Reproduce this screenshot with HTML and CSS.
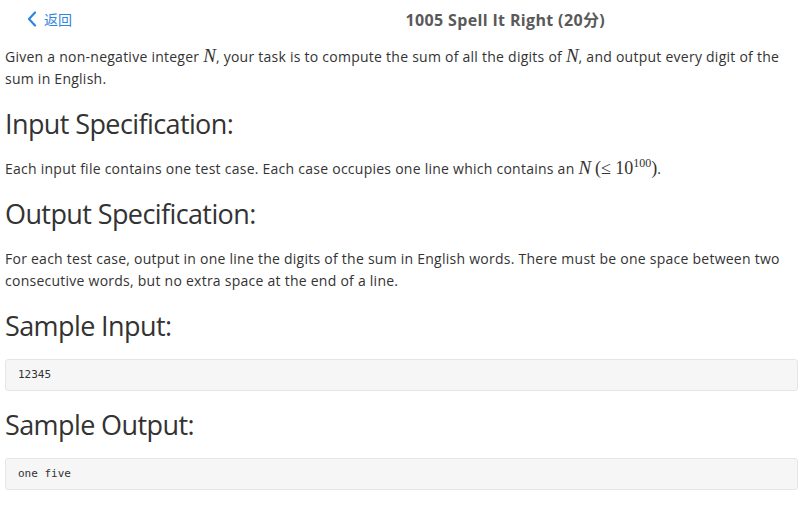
FILE: index.html
```html
<!DOCTYPE html>
<html lang="en">
<head>
<meta charset="utf-8">
<title>1005 Spell It Right</title>
<link rel="stylesheet" href="styles.css">
</head>
<body>
<header class="topbar">
  <a class="back" href="#">
    <svg class="chev" viewBox="0 0 10 16" width="10" height="16"><path d="M8 1.5 L2 8 L8 14.5" fill="none" stroke="currentColor" stroke-width="2.2" stroke-linecap="round" stroke-linejoin="round"/></svg>
    <span class="back-text">返回</span>
  </a>
  <h1 class="title">1005 Spell It Right (20分)</h1>
</header>
<main class="content">
  <p class="para">Given a non-negative integer <span class="math">N</span>, your task is to compute the sum of all the digits of <span class="math">N</span>, and output every digit of the sum in English.</p>
  <h2 class="heading">Input Specification:</h2>
  <p class="para">Each input file contains one test case. Each case occupies one line which contains an <span class="math">N</span> <span class="mathr">(≤ 10<sup class="sup">100</sup>)</span>.</p>
  <h2 class="heading">Output Specification:</h2>
  <p class="para">For each test case, output in one line the digits of the sum in English words. There must be one space between two consecutive words, but no extra space at the end of a line.</p>
  <h2 class="heading">Sample Input:</h2>
  <pre class="code">12345</pre>
  <h2 class="heading">Sample Output:</h2>
  <pre class="code">one five</pre>
</main>
</body>
</html>
```
FILE: styles.css
```css
html, body {
  margin: 0;
  padding: 0;
  background: #fff;
}
body {
  font-family: "Open Sans", "Noto Sans CJK SC", sans-serif;
  color: #333;
  font-size: 14px;
}
.topbar {
  height: 38px;
  display: flex;
  align-items: center;
  padding: 0 202px 0 27px;
}
.back {
  display: flex;
  align-items: center;
  gap: 7px;
  color: #2f86e0;
  text-decoration: none;
  font-size: 14px;
  font-family: "Noto Sans CJK SC", sans-serif;
}
.chev {
  display: block;
}
.title {
  margin: 0 0 0 auto;
  font-size: 16px;
  letter-spacing: 0.35px;
  font-weight: 700;
  color: #595959;
  font-family: "Open Sans", "Noto Sans CJK SC", sans-serif;
}
.content {
  padding: 0 9px 0 5px;
}
.para {
  margin: 8px 0 0;
  line-height: 22px;
  letter-spacing: 0.25px;
}
.math {
  font-family: "Liberation Serif", serif;
  font-style: italic;
  font-size: 19px;
  letter-spacing: 0;
  line-height: 0;
}
.mathr {
  font-family: "Liberation Serif", serif;
  font-size: 18px;
  letter-spacing: 0;
  line-height: 0;
}
.sup {
  font-size: 12px;
  line-height: 0;
  vertical-align: 7px;
}
.heading {
  margin: 17px 0 0;
  font-size: 27px;
  letter-spacing: -0.6px;
  font-weight: 400;
  line-height: 33px;
  color: #333;
}
.heading + .para {
  margin-top: 18px;
}
.code {
  margin: 17px 0 0;
  background: #f6f6f6;
  border: 1px solid #e6e6e6;
  border-radius: 3px;
  padding: 9px 12px;
  height: 12px;
  font-family: "DejaVu Sans Mono", monospace;
  font-size: 11px;
  line-height: 12px;
  color: #333;
}
```
